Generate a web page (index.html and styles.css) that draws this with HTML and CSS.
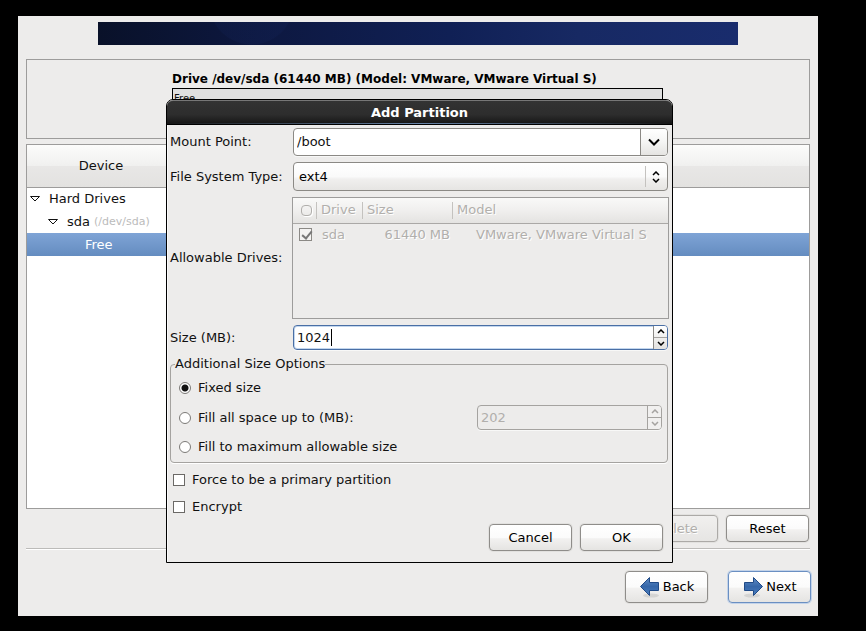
FILE: index.html
```html
<!DOCTYPE html>
<html lang="en">
<head>
<meta charset="utf-8">
<title>Add Partition</title>
<link rel="stylesheet" href="styles.css">
</head>
<body>
<main class="installer">
  <div class="banner"></div>

  <section class="drive-panel">
    <div class="drive">
      <h2 class="drive-title">Drive /dev/sda (61440 MB) (Model: VMware, VMware Virtual S)</h2>
      <div class="drive-bar">Free</div>
    </div>
  </section>

  <div class="tree">
    <table class="tree-table">
      <thead>
        <tr><th class="col-device">Device</th><th></th></tr>
      </thead>
      <tbody>
        <tr><td><span class="node"><svg class="expander" viewBox="0 0 12 8"><path d="M1.5 1.5h9L6 6z"/></svg>Hard Drives</span></td><td></td></tr>
        <tr><td><span class="node node-disk"><svg class="expander" viewBox="0 0 12 8"><path d="M1.5 1.5h9L6 6z"/></svg>sda <small class="path">(/dev/sda)</small></span></td><td></td></tr>
        <tr class="selected"><td><span class="node node-free">Free</span></td><td></td></tr>
      </tbody>
    </table>
  </div>

  <div class="actions">
    <button class="btn" type="button" disabled>Delete</button>
    <button class="btn" type="button">Reset</button>
  </div>

  <nav class="nav">
    <button class="btn btn-nav" type="button">
      <svg class="arrow" viewBox="0 0 22 22"><defs><linearGradient id="blue" x1="0" y1="0" x2="0" y2="1"><stop offset="0" stop-color="#5f8cc4"/><stop offset="0.5" stop-color="#3667a9"/><stop offset="1" stop-color="#4a7dbd"/></linearGradient></defs><ellipse class="shade" cx="12" cy="19.5" rx="8" ry="2"/><path d="M1.5 10.5 10.5 1.5V6.500H19.5V14.5H10.5V19.5z" fill="url(#blue)"/></svg>
      Back
    </button>
    <button class="btn btn-nav btn-default" type="button">
      <svg class="arrow" viewBox="0 0 22 22"><ellipse class="shade" cx="10" cy="19.5" rx="8" ry="2"/><path d="M20.5 10.5 11.5 1.5V6.500H2.500V14.5H11.5V19.5z" fill="url(#blue)"/></svg>
      Next
    </button>
  </nav>

  <form class="dialog" role="dialog" aria-labelledby="dialog-title">
    <h1 class="titlebar" id="dialog-title">Add Partition</h1>
    <div class="dialog-body">
      <div class="fields">
        <label for="mount">Mount Point:</label>
        <div class="entry combo">
          <input class="entry-text" id="mount" type="text" value="/boot">
          <button class="combo-button" type="button" aria-label="Show mount points"><svg class="chevron" viewBox="0 0 12 8"><path d="M1 1.500 6 6.500 11 1.500"/></svg></button>
        </div>

        <label for="fstype">File System Type:</label>
        <div class="select-wrap">
          <select class="select" id="fstype"><option>ext4</option></select>
          <svg class="updown" viewBox="0 0 8 12"><path d="M1 4 4 1 7 4M1 8 4 11 7 8"/></svg>
        </div>

        <span>Allowable Drives:</span>
        <div class="drives">
          <table class="drives-table">
            <thead>
              <tr><th class="c-check"><span class="ring"></span></th><th class="c-drive">Drive</th><th class="c-size">Size</th><th>Model</th></tr>
            </thead>
            <tbody>
              <tr><td class="c-check"><input class="check" type="checkbox" checked disabled aria-label="sda"></td><td>sda</td><td class="num">61440 MB</td><td class="model">VMware, VMware Virtual S</td></tr>
            </tbody>
          </table>
        </div>

        <label for="size">Size (MB):</label>
        <div class="entry spin focused">
          <input class="entry-text" id="size" type="text" value="1024">
          <span class="caret"></span>
          <div class="steppers">
            <button class="step" type="button" aria-label="Increase"><svg class="tick" viewBox="0 0 8 5"><path d="M1 4 4 1 7 4"/></svg></button>
            <button class="step" type="button" aria-label="Decrease"><svg class="tick" viewBox="0 0 8 5"><path d="M1 1 4 4 7 1"/></svg></button>
          </div>
        </div>
      </div>

      <fieldset class="options">
        <legend>Additional Size Options</legend>
        <div class="option"><input class="radio" type="radio" name="mode" id="fixed" checked><label for="fixed">Fixed size</label></div>
        <div class="option option-fill">
          <input class="radio" type="radio" name="mode" id="upto"><label for="upto">Fill all space up to (MB):</label>
          <div class="entry spin spin-off">
            <input class="entry-text" type="text" value="202" disabled aria-label="Maximum size in MB">
            <div class="steppers">
              <button class="step" type="button" disabled aria-label="Increase maximum"><svg class="tick" viewBox="0 0 8 5"><path d="M1 4 4 1 7 4"/></svg></button>
              <button class="step" type="button" disabled aria-label="Decrease maximum"><svg class="tick" viewBox="0 0 8 5"><path d="M1 1 4 4 7 1"/></svg></button>
            </div>
          </div>
        </div>
        <div class="option"><input class="radio" type="radio" name="mode" id="max"><label for="max">Fill to maximum allowable size</label></div>
      </fieldset>

      <div class="flags">
        <div class="flag"><input class="check" type="checkbox" id="primary"><label for="primary">Force to be a primary partition</label></div>
        <div class="flag"><input class="check" type="checkbox" id="encrypt"><label for="encrypt">Encrypt</label></div>
      </div>

      <div class="dialog-actions">
        <button class="btn" type="button">Cancel</button>
        <button class="btn" type="button">OK</button>
      </div>
    </div>
  </form>
</main>
</body>
</html>
```
FILE: styles.css
```css
* { box-sizing: border-box; }

body {
  margin: 0;
  padding: 16px 48px 15px 18px;
  background: #000;
  color: #111;
  font: 13px/16px "DejaVu Sans", sans-serif;
}

button, input, select { font: inherit; color: inherit; margin: 0; }
table { border-collapse: collapse; width: 100%; table-layout: fixed; }
th, td { padding: 0; font-weight: normal; text-align: left; }
svg { display: block; flex: none; fill: none; }

.installer {
  position: relative;
  display: flex;
  flex-direction: column;
  min-height: calc(100vh - 31px);
  padding: 6px 8px 13px;
  background: #edeceb;
}

.banner {
  width: calc(100% - 144px);
  height: 23px;
  margin: 0 auto 14px;
  background:
    radial-gradient(circle at 24% -20px, #1a2f7022 42px, transparent 43px),
    linear-gradient(90deg, #091129, #0d1840 25%, #102055 55%, #172963 75%, #192c6d);
}

.drive-panel {
  height: 80px;
  margin-bottom: 5px;
  padding: 11px 146px 0 145px;
  border: 1px solid #9d9c9b;
}
.drive-title { margin: 0 0 1px; font-size: 12px; line-height: 16px; font-weight: bold; color: #000; white-space: nowrap; }
.drive-bar {
  height: 40px;
  padding: 2px 1px;
  border: 1px solid #000;
  background: #e0e0e0;
  font-size: 10px;
}

.tree { flex: 1; min-height: 365px; background: #fff; border: 1px solid #9d9c9b; }
.tree-table th {
  height: 42px;
  border-bottom: 1px solid #9d9c9b;
  background: linear-gradient(#fcfcfb, #f0f0ef 50%, #e8e7e6 51%, #e3e2e0);
  text-align: center;
}
.tree-table .col-device { width: 148px; }
.tree-table td { height: 23px; white-space: nowrap; }
.node { display: flex; align-items: center; gap: 8px; padding-left: 2px; }
.node-disk { padding-left: 20px; }
.node-free { padding-left: 58px; }
.expander { width: 12px; height: 8px; stroke: #111; stroke-width: 1; }
.path { margin-left: -4px; font-size: 11px; color: #bbb; }
.selected { background: linear-gradient(#7fa4d6, #648cc0); color: #fff; }

.btn {
  display: flex;
  align-items: center;
  justify-content: center;
  width: 83px;
  height: 27px;
  padding: 0;
  border: 1px solid #8f8d8a;
  border-radius: 4px;
  background: linear-gradient(#fff, #fbfbfb 50%, #f2f1f0 55%, #e5e4e2);
  box-shadow: 0 0 0 1px #e2e1df;
  color: #000;
}
.btn:disabled { border-color: #acaaa7; background: linear-gradient(#f1f0ef, #e6e5e3); color: #b1afac; text-shadow: 1px 1px #fff; }
.actions {
  display: flex;
  justify-content: flex-end;
  gap: 8px;
  margin-bottom: 22px;
  padding: 6px 1px 6px;
  border-bottom: 1px solid #bcbbb9;
  box-shadow: 0 1px #fff;
}
.nav { display: flex; justify-content: flex-end; gap: 20px; margin-right: -1px; }
.btn-nav { height: 32px; gap: 2px; }
.btn-default { border-color: #6a8fc2; box-shadow: 0 0 0 1px #c3d3e9; }
.arrow { width: 22px; height: 22px; stroke: #204a87; }
.shade { fill: #00000018; stroke: none; }

.dialog {
  position: absolute;
  top: 83px;
  left: 148px;
  right: 145px;
  border: 1px solid #000;
  border-radius: 7px 7px 0 0;
  background: #edeceb;
}
.titlebar {
  height: 25px;
  margin: 0;
  border-top: 1px solid #777;
  border-bottom: 1px solid #000;
  border-radius: 6px 6px 0 0;
  background: linear-gradient(90deg, transparent, #6784a8 50%, transparent) 0 100% / 100% 1px no-repeat, linear-gradient(#333, #2d2d2d 60%, #151515);
  color: #fff;
  font-size: 13px;
  line-height: 23px;
  text-align: center;
}
.dialog-body { padding: 3px 3px 11px; box-shadow: inset 1px 0 #fafafa; }

.fields {
  display: grid;
  grid-template-columns: 123px 1fr;
  grid-template-rows: 28px 29px 122px 25px;
  row-gap: 6px;
  align-items: center;
  padding-right: 1px;
}
.fields label, .fields span { white-space: nowrap; }

.entry {
  position: relative;
  display: flex;
  height: 100%;
  border: 1px solid #8b8985;
  border-radius: 4px;
  background: #fff;
  box-shadow: 0 1px #f8f8f7;
  overflow: hidden;
}
.entry-text { flex: 1; min-width: 0; padding: 0 3px; border: 0; background: none; outline: 0; caret-color: transparent; }
.combo-button {
  display: grid;
  place-items: center;
  width: 27px;
  padding: 0;
  border: 0;
  border-left: 1px solid #8b8985;
  background: linear-gradient(#fff, #f5f5f4 50%, #e5e4e2);
}
.chevron { width: 12px; height: 8px; stroke: #000; stroke-width: 2; }

.select-wrap { position: relative; height: 100%; }
.select {
  width: 100%;
  height: 100%;
  padding: 0 5px;
  appearance: none;
  border: 1px solid #8b8985;
  border-radius: 4px;
  background: linear-gradient(#c4c2bf, #c4c2bf) calc(100% - 21px) 50% / 1px 21px no-repeat, linear-gradient(#fff, #fafafa 50%, #f0efee 60%, #e6e5e3);
  color: #000;
}
.updown { position: absolute; top: 9px; right: 8px; width: 8px; height: 12px; stroke: #000; stroke-width: 1.5; pointer-events: none; }

.drives { height: 100%; margin: 0 -1px; border: 1px solid #9d9c9b; color: #b1afac; text-shadow: 1px 1px #fff; }
.drives-table th {
  height: 25px;
  padding-left: 4px;
  border-bottom: 1px solid #aaa8a6;
  background: linear-gradient(#c4c2bf, #c4c2bf) 100% 50% / 1px 17px no-repeat, linear-gradient(#f9f9f8, #f0efee 50%, #e4e3e1);
}
.drives-table th:last-child { background: linear-gradient(#f9f9f8, #f0efee 50%, #e4e3e1); }
.drives-table td { height: 23px; padding-left: 5px; white-space: nowrap; }
.drives-table .c-check { width: 24px; padding-left: 6px; }
.drives-table .c-drive { width: 46px; }
.drives-table .c-size { width: 90px; }
.drives-table .num { padding: 0 3px 0 0; text-align: right; }
.drives-table .model { padding-left: 23px; }
.ring { display: block; width: 11px; height: 11px; margin-left: 2px; border: 1px solid #b1afac; border-radius: 4px; box-shadow: 1px 1px #fff; }

.focused { border-color: #4a6fa5; box-shadow: inset 0 0 0 1px #c3d7ee, 0 1px #f8f8f7; }
.caret { position: absolute; top: 3px; left: 37px; width: 1px; height: 17px; background: #000; }
.steppers {
  display: flex;
  flex-direction: column;
  width: 14px;
  border-left: 1px solid #8b8985;
  background: linear-gradient(#fff, #e2e1df);
}
.step { display: grid; flex: 1; place-items: center; padding: 0; border: 0; background: none; }
.step + .step { border-top: 1px solid #a5a3a0; }
.tick { width: 8px; height: 5px; stroke: #000; stroke-width: 1.5; }

.options {
  height: 107px;
  min-width: 0;
  margin: 6px 1px 0 0;
  padding: 6px 5px 0 8px;
  border: 1px solid #a5a3a0;
  border-radius: 4px;
  box-shadow: 0 1px #fff;
}
.options legend { margin-left: -4px; padding: 0; }
.option { display: flex; align-items: center; gap: 7px; height: 20px; }
.option-fill { height: 39px; }
.radio {
  width: 12px;
  height: 12px;
  appearance: none;
  border: 1px solid #7c7a77;
  border-radius: 50%;
  background: #fff;
}
.radio:checked { background: radial-gradient(circle, #111 3px, #fff 4px); }
.spin-off { width: 185px; height: 25px; margin-left: auto; border-color: #a5a3a0; background: #edeceb; color: #b1afac; }
.spin-off .steppers { border-color: #a5a3a0; background: #f1f0ef; }
.spin-off .tick { stroke: #a5a3a0; }

.flags { display: grid; gap: 11px; padding: 9px 3px; }
.flag { display: flex; align-items: center; gap: 7px; }
.check {
  display: block;
  width: 12px;
  height: 12px;
  appearance: none;
  border: 1px solid #6b6966;
  background: #fff;
}
.check:disabled { width: 13px; height: 13px; border-color: #8b8985; background: #f3f2f1; }
.check:checked::before {
  content: "";
  display: block;
  width: 4px;
  height: 8px;
  margin-left: 4px;
  border: solid #777;
  border-width: 0 2px 2px 0;
  transform: rotate(40deg);
}
.dialog-actions { display: flex; justify-content: flex-end; gap: 8px; padding-right: 6px; }
```
